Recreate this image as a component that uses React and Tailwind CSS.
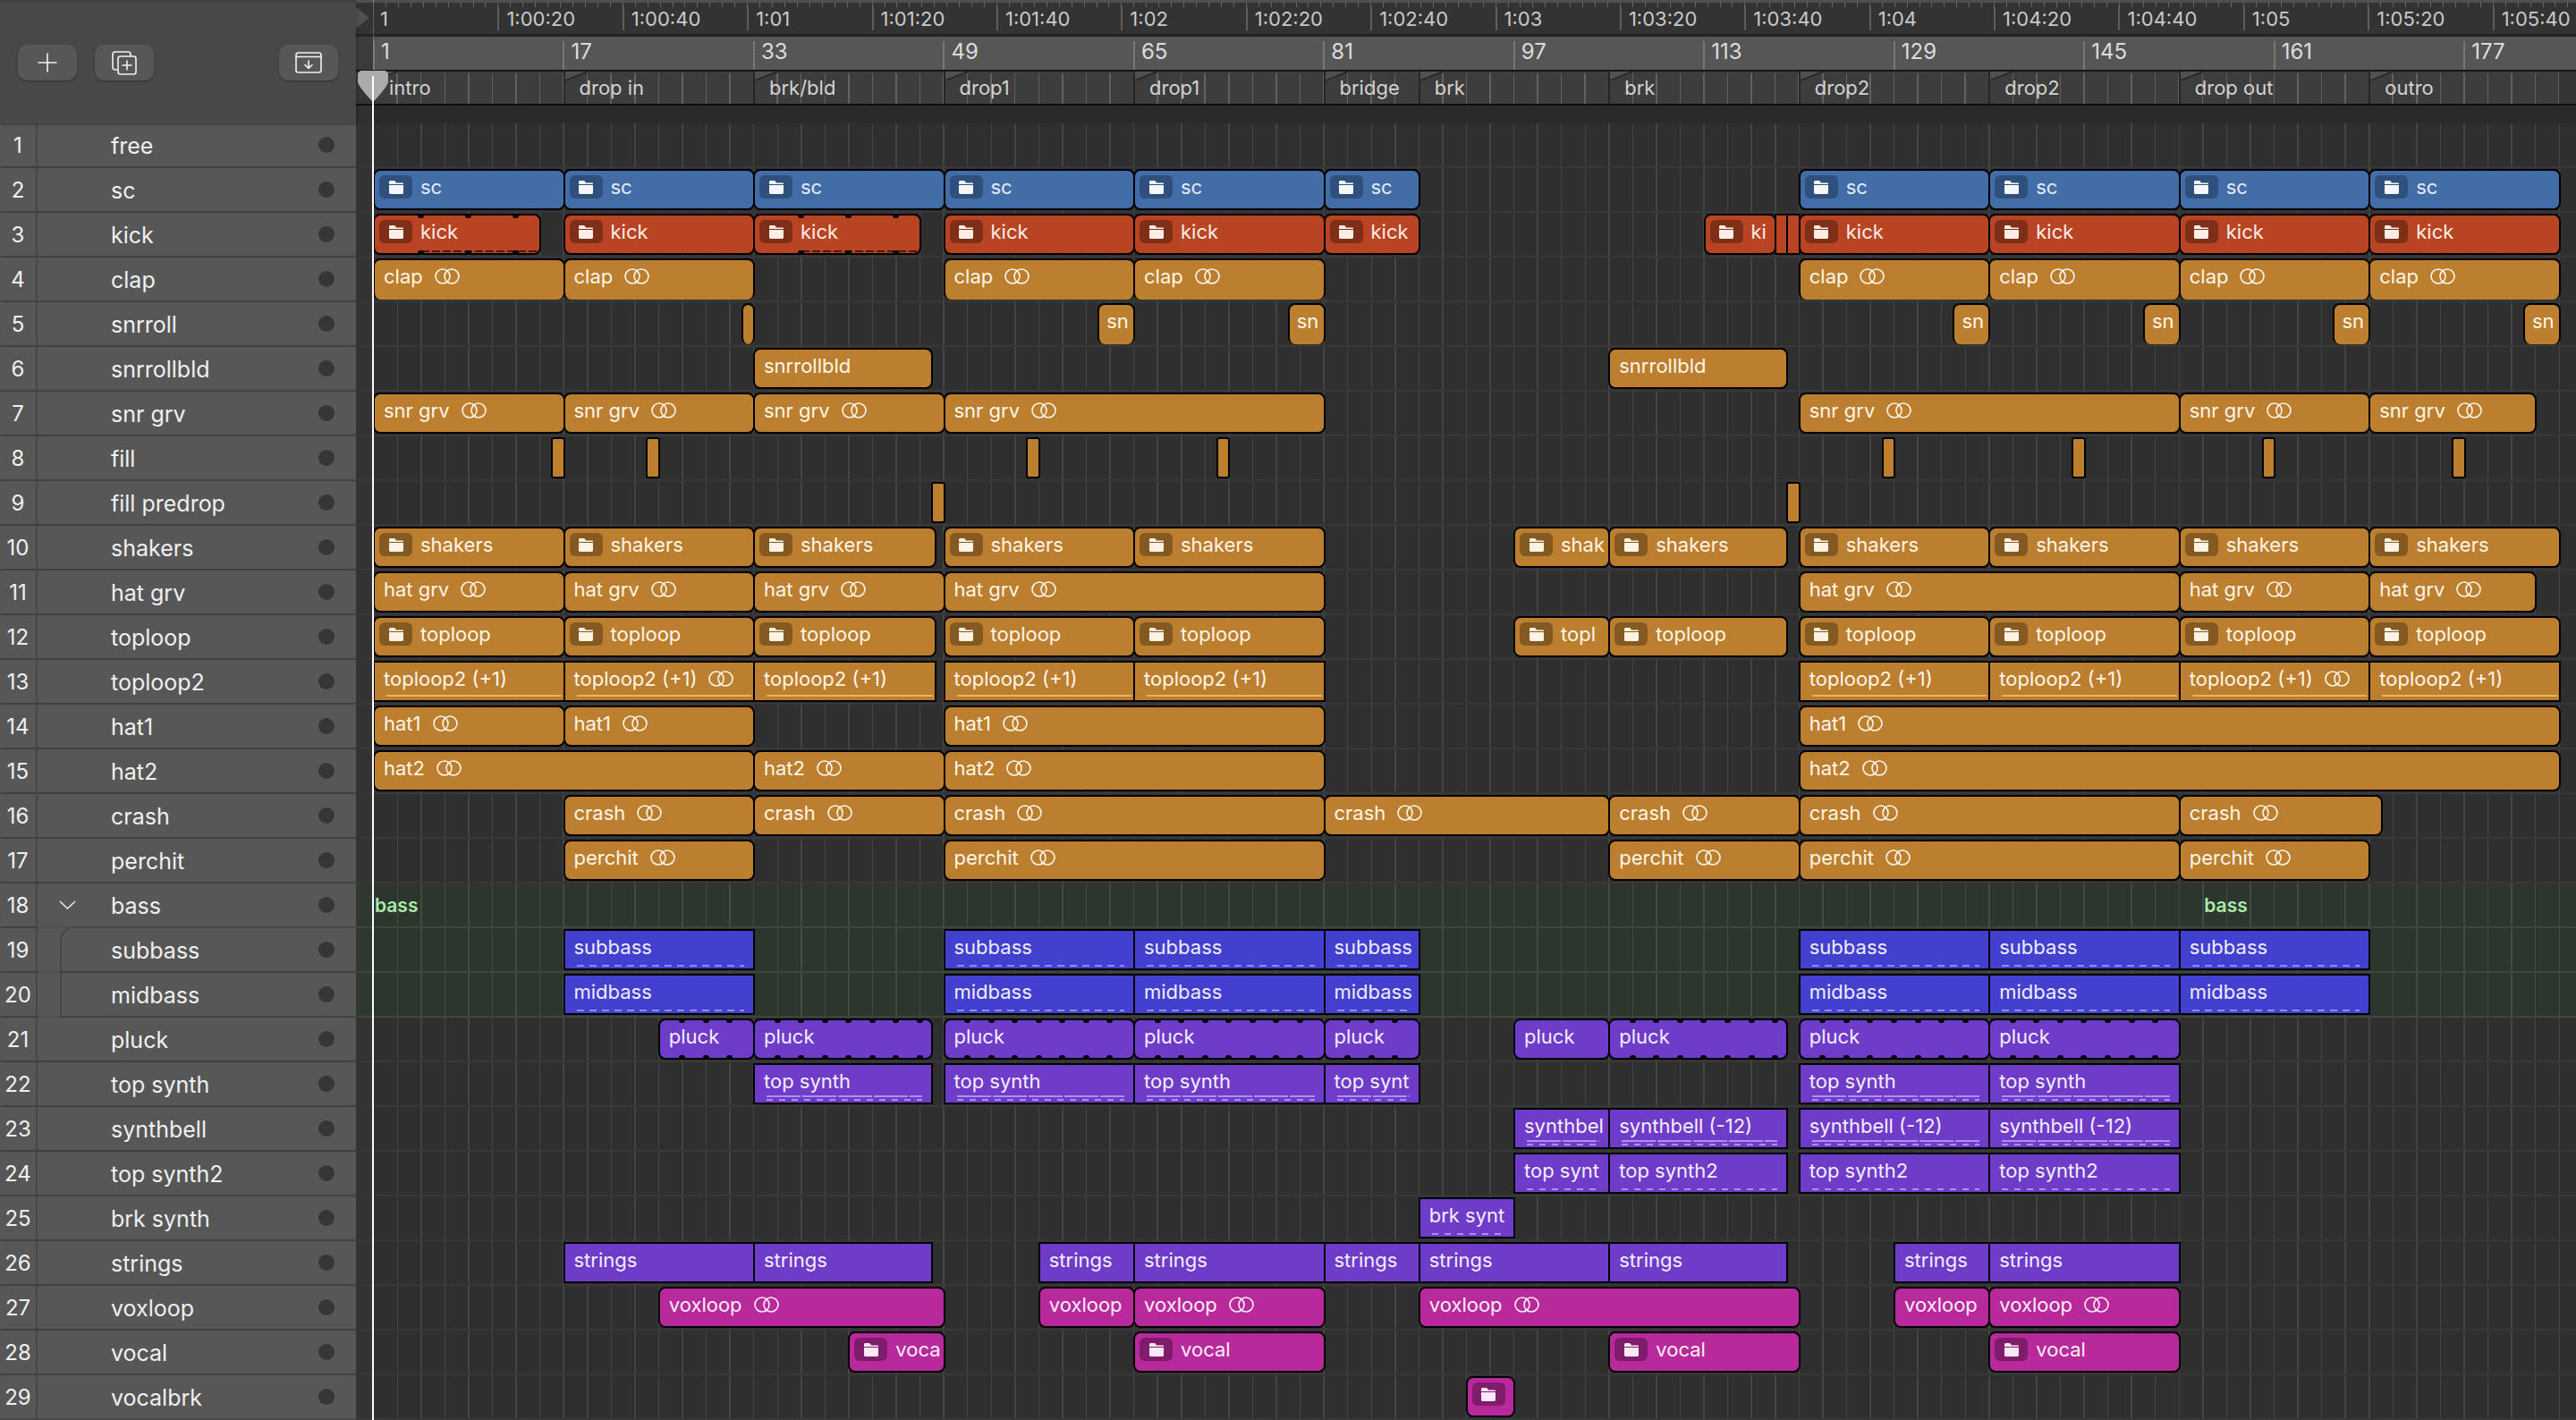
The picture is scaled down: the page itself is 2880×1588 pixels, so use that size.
import React from "react";

const tone = {
  blue: { bg: "bg-[#436da7]", box: "bg-[#2f4f7c]", text: "text-[#e3ecf8]", icon: "#f4f7fb" },
  red: { bg: "bg-[#b84423]", box: "bg-[#7f2e17]", text: "text-[#fdeee9]", icon: "#fdeee6" },
  orange: { bg: "bg-[#bc7f2f]", box: "bg-[#845a22]", text: "text-[#fff6ea]", icon: "#fdf3e3" },
  indigo: { bg: "bg-[#4340cf]", box: "bg-[#2f2d90]", text: "text-[#eeeeff]", icon: "#ffffff" },
  purple: { bg: "bg-[#6f3bc9]", box: "bg-[#4d298c]", text: "text-[#f4efff]", icon: "#ffffff" },
  magenta: { bg: "bg-[#b82a9c]", box: "bg-[#7f1d6c]", text: "text-[#fdeefa]", icon: "#fde8f7" },
};

const every2 = (a, b) => {
  const r = [];
  for (let x = a + 2; x < b; x += 2) r.push(x);
  return r;
};

const F = { folder: true };
const L = { loop: true };
const S = { square: true };

const loops = (label, spans) => spans.map(([a, b, o]) => [a, b, label, { ...L, ...(o || {}) }]);
const folders = (label, spans) => spans.map(([a, b, t]) => [a, b, t || label, F]);

const drop4 = [[121, 137], [137, 153], [153, 169], [169, 185]];
const drop5 = [[1, 17], [17, 33], [33, 48.25], [49, 65], [65, 81]];

const plain = (label, spans, extra) => spans.map(([a, b, t]) => [a, b, t || label, extra]);

const tracks = [
  { name: "free", clips: [] },
  { name: "sc", tone: "blue", clips: folders("sc", [[1, 17], [17, 33], [33, 49], [49, 65], [65, 81], [81, 89], ...drop4]) },
  {
    name: "kick",
    tone: "red",
    clips: [
      [1, 15, "kick", { folder: true, notch: [5, 9, 13], notes: "dark" }],
      [17, 33, "kick", F],
      [33, 47, "kick", { folder: true, notch: [37, 41, 45], notes: "dark" }],
      [49, 65, "kick", F],
      [65, 81, "kick", F],
      [81, 89, "kick", F],
      [113, 119, "ki", F],
      [119, 120, "", S],
      [120, 121, "", S],
      ...folders("kick", drop4),
    ],
  },
  {
    name: "clap",
    tone: "orange",
    clips: loops("clap", [[1, 17], [17, 33], [49, 65], [65, 81], ...drop4]).map((c) => [c[0], c[1], c[2], { ...c[3], open: true }]),
  },
  {
    name: "snrroll",
    tone: "orange",
    clips: [
      [32, 33, "", { open: true }],
      ...[[62, 65], [78, 81], [134, 137], [150, 153], [166, 169], [182, 185]].map(([a, b]) => [a, b, "sn", { open: true, tight: true }]),
    ],
  },
  { name: "snrrollbld", tone: "orange", clips: plain("snrrollbld", [[33, 48], [105, 120]]) },
  { name: "snr grv", tone: "orange", clips: loops("snr grv", [[1, 17], [17, 33], [33, 49], [49, 81], [121, 153], [153, 169], [169, 183]]) },
  { name: "fill", tone: "orange", clips: plain("", [[16, 17], [24, 25], [56, 57], [72, 73], [128, 129], [144, 145], [160, 161], [176, 177]], { small: true }) },
  { name: "fill predrop", tone: "orange", clips: plain("", [[48, 49], [120, 121]], { small: true }) },
  { name: "shakers", tone: "orange", clips: folders("shakers", [...drop5, [97, 105, "shak"], [105, 120], ...drop4]) },
  { name: "hat grv", tone: "orange", clips: loops("hat grv", [[1, 17], [17, 33], [33, 49], [49, 81], [121, 153], [153, 169], [169, 183]]) },
  { name: "toploop", tone: "orange", clips: folders("toploop", [...drop5, [97, 105, "topl"], [105, 120], ...drop4]) },
  {
    name: "toploop2",
    tone: "orange",
    clips: [
      [1, 17], [17, 33, L], [33, 48.25], [49, 65], [65, 81], [121, 137], [137, 153], [153, 169, L], [169, 185],
    ].map(([a, b, o]) => [a, b, "toploop2 (+1)", { ...S, ...(o || {}), notes: "line" }]),
  },
  { name: "hat1", tone: "orange", clips: loops("hat1", [[1, 17], [17, 33], [49, 81], [121, 185]]) },
  { name: "hat2", tone: "orange", clips: loops("hat2", [[1, 33], [33, 49], [49, 81], [121, 185]]) },
  { name: "crash", tone: "orange", clips: loops("crash", [[17, 33], [33, 49], [49, 81], [81, 105], [105, 121], [121, 153], [153, 170]]) },
  { name: "perchit", tone: "orange", clips: loops("perchit", [[17, 33], [49, 81], [105, 121], [121, 153], [153, 169]]) },
  { name: "bass", group: true, tint: true, clips: [] },
  { name: "subbass", sub: "first", tint: true, tone: "indigo", clips: plain("subbass", [[17, 33], [49, 65], [65, 81], [81, 89], [121, 137], [137, 153], [153, 169]], { ...S, notes: "dash" }) },
  { name: "midbass", sub: "rest", tint: true, tone: "indigo", clips: plain("midbass", [[17, 33], [49, 65], [65, 81], [81, 89], [121, 137], [137, 153], [153, 169]], { ...S, notes: "dash" }) },
  {
    name: "pluck",
    tone: "purple",
    clips: [[25, 33], [33, 48], [49, 65], [65, 81], [81, 89], [97, 105, "plain"], [105, 120], [121, 137], [137, 153]].map(([a, b, p]) => [a, b, "pluck", p ? {} : { notch: every2(a, b) }]),
  },
  { name: "top synth", tone: "purple", clips: [[33, 48], [49, 65], [65, 81], [81, 89, "top synt"], [121, 137], [137, 153]].map(([a, b, t]) => [a, b, t || "top synth", { ...S, notes: "both" }]) },
  { name: "synthbell", tone: "purple", clips: [[97, 105, "synthbel"], [105, 120], [121, 137], [137, 153]].map(([a, b, t]) => [a, b, t || "synthbell (-12)", { ...S, notes: "both" }]) },
  { name: "top synth2", tone: "purple", clips: [[97, 105, "top synt"], [105, 120], [121, 137], [137, 153]].map(([a, b, t]) => [a, b, t || "top synth2", { ...S, notes: "dash" }]) },
  { name: "brk synth", tone: "purple", clips: [[89, 97, "brk synt", { ...S, notes: "dash" }]] },
  { name: "strings", tone: "purple", clips: plain("strings", [[17, 33], [33, 48], [57, 65], [65, 81], [81, 89], [89, 105], [105, 120], [129, 137], [137, 153]], S) },
  {
    name: "voxloop",
    tone: "magenta",
    clips: [[25, 49, L], [57, 65], [65, 81, L], [89, 121, L], [129, 137], [137, 153, L]].map(([a, b, o]) => [a, b, "voxloop", o || {}]),
  },
  { name: "vocal", tone: "magenta", clips: folders("vocal", [[41, 49, "voca"], [65, 81], [105, 121], [137, 153]]) },
  { name: "vocalbrk", tone: "magenta", clips: [[93, 97, "", F]] },
];

const markers = [
  [1, 17, "intro"], [17, 33, "drop in"], [33, 49, "brk/bld"], [49, 65, "drop1"], [65, 81, "drop1"], [81, 89, "bridge"],
  [89, 105, "brk"], [105, 121, "brk"], [121, 137, "drop2"], [137, 153, "drop2"], [153, 169, "drop out"], [169, 185, "outro"],
];

const times = ["1", "1:00:20", "1:00:40", "1:01", "1:01:20", "1:01:40", "1:02", "1:02:20", "1:02:40", "1:03", "1:03:20", "1:03:40", "1:04", "1:04:20", "1:04:40", "1:05", "1:05:20", "1:05:40"];
const bars = [1, 17, 33, 49, 65, 81, 97, 113, 129, 145, 161, 177];

const span = (a, b) => ({ gridColumn: `${Math.round((a - 1) * 4) + 1} / ${Math.round((b - 1) * 4) + 1}` });

function FolderIcon({ color }) {
  return (
    <svg width="18" height="15" viewBox="0 0 18 15">
      <path d="M1 1.5C1 .7 1.7 0 2.5 0h4c.6 0 1 .3 1.4 .8L9 2.5H16c.6 0 1 .5 1 1V4H1z" fill={color} />
      <path d="M1 5h16v8.2c0 1-.8 1.8-1.8 1.8H2.8C1.8 15 1 14.2 1 13.2z" fill={color} />
    </svg>
  );
}

function LoopIcon() {
  return (
    <svg width="28" height="18" viewBox="0 0 28 18" fill="none" stroke="currentColor" strokeWidth="1.6" className="ml-[13px] shrink-0">
      <circle cx="9" cy="9" r="8" />
      <circle cx="19" cy="9" r="8" />
    </svg>
  );
}

function Notes({ kind, toneName }) {
  const dashColor = {
    indigo: "bg-[repeating-linear-gradient(90deg,#8f8df0_0,#8f8df0_8px,transparent_8px,transparent_14px)]",
    purple: "bg-[repeating-linear-gradient(90deg,#b08df0_0,#b08df0_7px,transparent_7px,transparent_14px)]",
  }[toneName];
  if (kind === "line") {
    return <div className="mt-auto mb-[4px] ml-[13px] mr-[2px] h-[2px] bg-[#e9b062]" />;
  }
  if (kind === "dark") {
    return <div className="mt-auto mb-[1px] ml-[52px] mr-[2px] h-[2px] bg-[repeating-linear-gradient(90deg,#4a1c10_0,#4a1c10_9px,transparent_9px,transparent_12px)]" />;
  }
  return (
    <div className="mt-auto mb-[2px] ml-[13px] mr-[10px] flex flex-col gap-[2px]">
      {kind === "both" && <div className="h-[2px] bg-[repeating-linear-gradient(90deg,#b08df0_0,#b08df0_38px,transparent_38px,transparent_40px)]" />}
      <div className={`h-[2px] ${dashColor}`} />
    </div>
  );
}

function Clip({ clip, toneName }) {
  const [a, b, label, o = {}] = clip;
  const t = tone[toneName];
  const radius = o.square ? "rounded-none" : o.small ? "rounded-[3px]" : "rounded-[8px]";
  const border = o.open ? "border-x-2 border-t-2 border-b-0 border-black h-[46px]" : "border-2 border-black h-[46px]";
  return (
    <div style={span(a, b)} className={`relative mt-px mr-[-2px] flex min-w-0 flex-col overflow-hidden whitespace-nowrap ${border} ${radius} ${t.bg} ${t.text}`}>
      {(label || o.folder) && (
        <div className={`flex h-[31px] shrink-0 items-center pt-[5px] text-[22px] leading-[26px] ${o.folder ? "pl-[5px]" : o.tight ? "pl-[8px]" : "pl-[10px]"}`}>
          {o.folder && (
            <span className={`flex h-[26px] w-[37px] shrink-0 items-center justify-center rounded-[6px] ${t.box}`}>
              <FolderIcon color={t.icon} />
            </span>
          )}
          {label && <span className={o.folder ? "ml-[9px]" : ""}>{label}</span>}
          {o.loop && <LoopIcon />}
        </div>
      )}
      {o.notes && <Notes kind={o.notes} toneName={toneName} />}
      {o.notch &&
        o.notch.map((n) => (
          <React.Fragment key={n}>
            <span style={{ left: (n - a) * 13.28 - 5 }} className="absolute top-0 h-[3px] w-[7px] rounded-b-full bg-black" />
            <span style={{ left: (n - a) * 13.28 - 5 }} className="absolute bottom-0 h-[3px] w-[7px] rounded-t-full bg-black" />
          </React.Fragment>
        ))}
    </div>
  );
}

function NameCell({ track }) {
  const dot = <span className="ml-auto h-[18px] w-[18px] shrink-0 rounded-full bg-[#363636]" />;
  const label = <span className="pt-[2px]">{track.name}</span>;
  if (track.sub) {
    const first = track.sub === "first";
    return (
      <div className="flex h-full flex-1 pl-[25px] pr-0">
        <div className={`flex flex-1 items-center border-b-2 border-l-2 border-[#474747] pl-[55px] pr-[24px] ${first ? "-mt-[2px] h-[52px] rounded-tl-[16px] border-t-2" : "h-[50px]"}`}>
          {label}
          {dot}
        </div>
      </div>
    );
  }
  if (track.group) {
    return (
      <div className="flex h-full flex-1 items-center pb-[2px] pl-[24px] pr-[24px]">
        <svg width="19" height="10" viewBox="0 0 19 10" fill="none" stroke="#eeeeee" strokeWidth="1.5" className="mr-[39px]">
          <polyline points="1,1 9.5,9 18,1" />
        </svg>
        {label}
        {dot}
      </div>
    );
  }
  return (
    <div className="flex h-full flex-1 items-center border-b-2 border-[#474747] pl-[82px] pr-[24px]">
      {label}
      {dot}
    </div>
  );
}

function Btn({ children }) {
  return <div className="flex h-[40px] w-[66px] items-center justify-center rounded-[10px] bg-[#575757] shadow-[0_1px_2px_rgba(0,0,0,0.35)]">{children}</div>;
}

export default function App() {
  return (
    <div className="relative h-[1588px] w-[2880px] overflow-hidden bg-[#2f2f2f] font-['Inter','Liberation_Sans',sans-serif] text-[#f0f0f0]">
      {/* Header */}
      <div className="flex h-[138px]">
        <div className="relative z-10 flex w-[398px] shrink-0 items-start gap-[20px] border-t-[3px] border-[#404040] bg-[#484848] pl-[20px] pr-[20px] pt-[47px] shadow-[0_1px_3px_rgba(0,0,0,0.4)]">
          <Btn>
            <svg width="22" height="22" viewBox="0 0 22 22" stroke="#f2f2f2" strokeWidth="1.6" strokeLinecap="round">
              <path d="M11 1V21M1 11H21" />
            </svg>
          </Btn>
          <Btn>
            <svg width="28" height="27" viewBox="0 0 28 27" fill="none" stroke="#f2f2f2" strokeWidth="1.6">
              <path d="M6 21H4a3 3 0 0 1-3-3V4a3 3 0 0 1 3-3h14a3 3 0 0 1 3 3v2" />
              <rect x="7" y="6" width="20" height="20" rx="2.5" />
              <path d="M17 10.5V21.5M11.5 16H22.5" />
            </svg>
          </Btn>
          <div className="ml-auto">
            <Btn>
              <svg width="30" height="24" viewBox="0 0 30 24" fill="none" stroke="#f2f2f2" strokeWidth="1.6" strokeLinecap="round" strokeLinejoin="round">
                <rect x="1" y="1" width="28" height="22" rx="2.5" />
                <path d="M1 5.5H29" />
                <path d="M15 10V18M11 14.5L15 18.5L19 14.5" />
              </svg>
            </Btn>
          </div>
        </div>
        <div className="flex flex-1 flex-col">
          <div className="h-[3px] bg-[#505050]" />
          {/* Time ruler */}
          <div className="relative flex h-[35px] bg-[#333333]">
            <div className="w-[19px] shrink-0">
              <svg width="15" height="24" viewBox="0 0 15 24" className="mt-[5px]">
                <path d="M0 0L15 12L0 24Z" fill="#505050" />
              </svg>
            </div>
            <div className="flex flex-1 bg-[repeating-linear-gradient(90deg,#6a6a6a_0,#6a6a6a_1px,transparent_1px,transparent_13.94px)] bg-[length:100%_5px] bg-no-repeat">
              {times.map((x, i) => (
                <div key={i} className={`mt-[5px] flex h-[26px] w-[139.4px] shrink-0 items-center whitespace-nowrap pl-[8px] text-[22px] leading-[26px] text-[#c9c9c9] ${i > 0 ? "border-l-2 border-[#5f5f5f]" : ""}`}>
                  {x}
                </div>
              ))}
            </div>
          </div>
          <div className="h-[3px] bg-[#232323]" />
          {/* Bar ruler */}
          <div className="flex h-[37px] bg-[#3b3b3b]">
            <div className="w-[19px] shrink-0" />
            <div className="flex flex-1 overflow-hidden bg-[#565656]">
              {bars.map((x) => (
                <div key={x} className="mt-[5px] h-[32px] w-[212.48px] shrink-0 border-l-2 border-[#777777] pl-[7px] text-[24px] leading-[24px] text-[#dcdcdc]">
                  {x}
                </div>
              ))}
            </div>
          </div>
          <div className="h-[2px] bg-[#161616]" />
          {/* Marker row */}
          <div className="flex h-[36px] bg-[#353535]">
            <div className="w-[19px] shrink-0" />
            <div className="grid w-[2443.75px] grid-cols-[repeat(368,3.3125px_3.328125px)] bg-[#3d3d3d] bg-[repeating-linear-gradient(90deg,#616161_0,#616161_1.5px,transparent_1.5px,transparent_26.56px)] bg-[length:100%_34px] bg-bottom bg-no-repeat">
              {markers.map(([a, b, t]) => (
                <div key={a} style={span(a, b)} className="relative border-l-2 border-[#262626] pl-[16px] text-[22px] leading-[36px] whitespace-nowrap text-[#d2d2d2]">
                  <svg width="25" height="10" viewBox="0 0 25 10" className="absolute left-0 top-0">
                    <path d="M0 10L25 0H0Z" fill="#505050" />
                    <path d="M0 10L25 0" stroke="#222222" strokeWidth="1.5" />
                  </svg>
                  <span className="relative">{t}</span>
                </div>
              ))}
            </div>
          </div>
          <div className="h-[2px] bg-[#0f0f0f]" />
          <div className="flex flex-1 bg-[#2a2a2a]">
            <div className="w-[19px] shrink-0 bg-[#303030]" />
          </div>
        </div>
      </div>

      {/* Tracks */}
      {tracks.map((track, i) => (
        <div key={i} className="flex h-[50px]">
          <div className="flex h-full w-[398px] shrink-0 bg-[#575757] text-[25px] leading-[30px] shadow-[2px_0_3px_rgba(0,0,0,0.25)]">
            <div className="flex h-full w-[42px] shrink-0 items-center justify-center border-b-2 border-r-2 border-[#474747] pt-[2px] text-[24px]">{i + 1}</div>
            <NameCell track={track} />
          </div>
          <div className={`flex flex-1 border-b-2 ${track.tint ? "border-[#3c463c] bg-[#2d362d]" : "border-[#383838] bg-[#2f2f2f]"}`}>
            <div className={`w-[19px] shrink-0 ${track.tint ? "bg-[#2f382f]" : "bg-[#333333]"}`} />
            <div className="relative grid flex-1 grid-cols-[repeat(368,3.3125px_3.328125px)] bg-[repeating-linear-gradient(90deg,rgba(255,255,255,0.1)_0,rgba(255,255,255,0.1)_1.5px,transparent_1.5px,transparent_26.56px)]">
              {track.clips.map((c, k) => (
                <Clip key={k} clip={c} toneName={track.tone} />
              ))}
              {track.group && (
                <>
                  <div style={span(1, 20)} className="pl-[2px] text-[21px] font-semibold leading-[50px] text-[#a9eca9]">bass</div>
                  <div style={span(155, 175)} className="pl-[2px] text-[21px] font-semibold leading-[50px] text-[#a9eca9]">bass</div>
                </>
              )}
            </div>
          </div>
        </div>
      ))}

      {/* Playhead */}
      <div className="absolute bottom-0 left-[416px] top-[85px] z-20 w-[2px] bg-white" />
      <div className="absolute left-[417px] top-0 z-20 h-[80px] w-0 border-l border-dotted border-[#8a8a8a]" />
      <svg width="34" height="35" viewBox="0 0 34 35" className="absolute left-[400px] top-[79px] z-10">
        <path d="M5 0H29C32 0 34 2 34 5V12C34 17 22 30 17 35C12 30 0 17 0 12V5C0 2 2 0 5 0Z" fill="#ababab" />
      </svg>
    </div>
  );
}
